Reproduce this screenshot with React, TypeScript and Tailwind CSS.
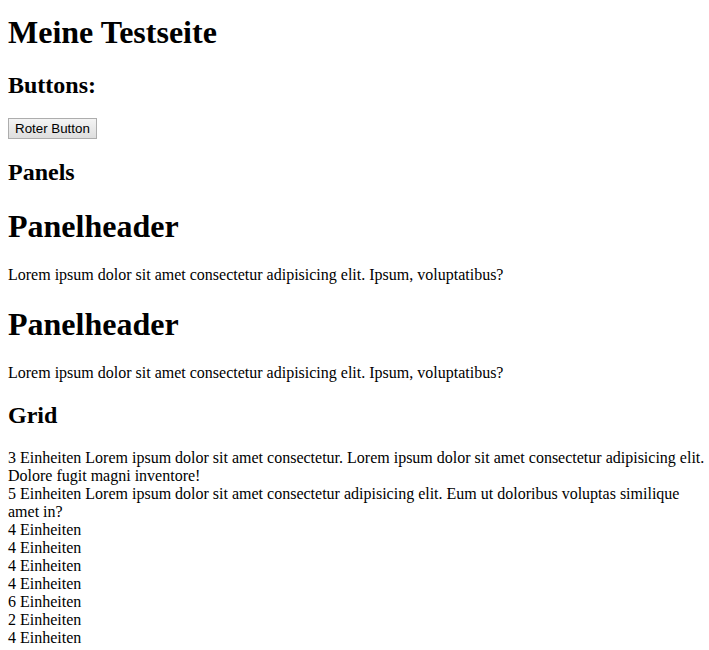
import React from 'react';

const serif = "font-['Liberation_Serif','Times_New_Roman',serif]";

const gridItems = [
  '3 Einheiten Lorem ipsum dolor sit amet consectetur. Lorem ipsum dolor sit amet consectetur adipisicing elit. Dolore fugit magni inventore!',
  '5 Einheiten Lorem ipsum dolor sit amet consectetur adipisicing elit. Eum ut doloribus voluptas similique amet in?',
  '4 Einheiten',
  '4 Einheiten',
  '4 Einheiten',
  '4 Einheiten',
  '6 Einheiten',
  '2 Einheiten',
  '4 Einheiten',
];

const lorem = 'Lorem ipsum dolor sit amet consectetur adipisicing elit. Ipsum, voluptatibus?';

const App = () => {
  return (
    <div className={`${serif} min-h-screen bg-white pl-2 pr-0 pt-[14px] pb-2 text-black text-[16px] leading-[18px]`}>
      <h1 className="mb-[21.44px] text-[32px] font-bold leading-[37px]">Meine Testseite</h1>

      <h2 className="mb-[19px] text-[24px] font-bold leading-[27px]">Buttons:</h2>
      <div className="mb-[19.92px] h-[21px]">
        <button className="block h-[21px] border border-[#adadad] bg-gradient-to-b from-[#f4f4f4] to-[#dedede] px-[6px] font-['Liberation_Sans',Arial,sans-serif] text-[13.33px] leading-[17px] text-black">
          Roter Button
        </button>
      </div>

      <h2 className="mb-[21.44px] text-[24px] font-bold leading-[27px]">Panels</h2>

      <div>
        <h1 className="mb-[21.44px] text-[32px] font-bold leading-[37px]">Panelheader</h1>
        <p className="mb-[21.44px]">{lorem}</p>
      </div>
      <div>
        <h1 className="mb-[21.44px] text-[32px] font-bold leading-[37px]">Panelheader</h1>
        <p className="mb-[19.92px]">{lorem}</p>
      </div>

      <h2 className="mb-[19.92px] text-[24px] font-bold leading-[27px]">Grid</h2>
      <div>
        {gridItems.map((item, i) => (
          <div key={i}>{item}</div>
        ))}
      </div>
    </div>
  );
};

export default App;
